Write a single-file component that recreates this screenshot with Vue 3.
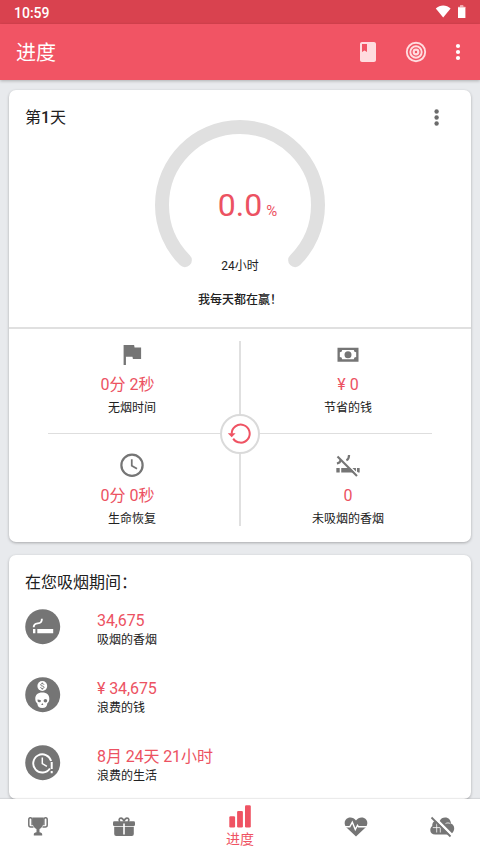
<script setup>
const stats = [
  { icon: 'flag', value: '0分 2秒', label: '无烟时间', area: 'a', trail: true },
  { icon: 'cash', value: '¥ 0', label: '节省的钱', area: 'b' },
  { icon: 'clock', value: '0分 0秒', label: '生命恢复', area: 'c', trail: true },
  { icon: 'nosmoke', value: '0', label: '未吸烟的香烟', area: 'd' },
]
const losses = [
  { icon: 'cigarette', value: '34,675', label: '吸烟的香烟' },
  { icon: 'skull', value: '¥ 34,675', label: '浪费的钱' },
  { icon: 'time', value: '8月 24天 21小时', label: '浪费的生活' },
]
</script>

<template>
  <div class="screen">
    <div class="status">
      <span>10:59</span>
      <svg class="status-icons" width="32" height="16" viewBox="0 0 32 16">
        <path d="M8.200 13.500.8 4.400C5 .5 11.400.5 15.600 4.400z" fill="#fff" />
        <path d="M25.200 1.500h3v1.500h2.200v11H23V3h2.200z" fill="#fff" />
        <path d="M25.200 1.200h3v1.500h2.200v.9H23v-.9h2.200z" fill="#f3a9b0" />
      </svg>
    </div>
    <header class="bar">
      <h1>进度</h1>
      <svg class="book" width="24" height="24" viewBox="0 0 24 24">
        <path fill-rule="evenodd" d="M18 2H6C4.900 2 4 2.900 4 4v16c0 1.100.9 2 2 2h12c1.100 0 2-.9 2-2V4c0-1.100-.9-2-2-2zM6 4h5v8l-2.500-1.500L6 12z" />
      </svg>
      <svg class="target" width="24" height="24" viewBox="0 0 24 24">
        <circle cx="12" cy="12" r="9.200" /><circle cx="12" cy="12" r="5.700" /><circle cx="12" cy="12" r="2.300" />
      </svg>
      <svg class="dots light" width="24" height="24" viewBox="0 0 24 24">
        <circle cx="12" cy="6" r="2.100" /><circle cx="12" cy="12" r="2.100" /><circle cx="12" cy="18" r="2.100" />
      </svg>
    </header>

    <main>
      <section class="card progress">
        <div class="top">
          <div class="head">
            <h2 class="day">第<b>1</b>天</h2>
            <svg class="dots" width="24" height="24" viewBox="0 0 24 24">
              <circle cx="11.600" cy="6.500" r="2.200" /><circle cx="11.600" cy="12.500" r="2.200" /><circle cx="11.600" cy="18.500" r="2.200" />
            </svg>
          </div>
          <div class="gauge">
            <svg width="172" height="172" viewBox="0 0 172 172">
              <path d="M30.850 141.150A78 78 0 1 1 141.150 141.150" fill="none" stroke="#e0e0e0" stroke-width="14" stroke-linecap="round" />
            </svg>
            <div class="reading"><span class="num">0.0</span><span class="pct">%</span></div>
            <div class="period">24小时</div>
          </div>
          <p class="motto">我每天都在赢！</p>
        </div>

        <div class="stats">
          <div v-for="s in stats" :key="s.area" class="stat" :class="['area-' + s.area, { trail: s.trail }]">
            <svg width="28" height="28" viewBox="0 0 24 24">
              <path v-if="s.icon === 'flag'" d="M14.400 6 14 4H5v17h2v-7h5.600l.4 2h7V6z" transform="translate(-.2 -.5)" />
              <path v-else-if="s.icon === 'cash'" d="M3 6h18v12H3zM12 9a3 3 0 1 1 0 6 3 3 0 0 1 0-6M7 8a2 2 0 0 1-2 2v4a2 2 0 0 1 2 2h10a2 2 0 0 1 2-2v-4a2 2 0 0 1-2-2z" fill-rule="evenodd" transform="translate(0 -.3)" />
              <g v-else-if="s.icon === 'clock'" fill="none" stroke="#757575">
                <circle cx="12" cy="12.200" r="9.100" stroke-width="1.900" />
                <path d="M11.800 7v5.600l4.500 2.700" stroke-width="1.500" />
              </g>
              <g v-else>
                <path d="M2 14.500h2.900v4H2zM6.200 14.500h7.500l4 4H6.200zM15.800 14.500h3v3zM19.700 14.500H22v4h-1.300l-1-1z" />
                <path d="M2.500 10.700c2-.4 3-1.500 3.300-3" fill="none" stroke="#757575" stroke-width="1.900" />
                <path d="M10.600 7.900c1.600-.6 2.300-1.900 2.300-4.500" fill="none" stroke="#757575" stroke-width="1.900" />
                <path d="M3 4.800 19.700 21.500" fill="none" stroke="#757575" stroke-width="1.800" />
              </g>
            </svg>
            <div class="value">{{ s.value }}</div>
            <div class="label">{{ s.label }}</div>
          </div>
          <i class="vline"></i>
          <i class="hline"></i>
          <button class="reset" aria-label="reset">
            <svg width="26" height="26" viewBox="0 0 26 26">
              <path d="M4.700 12.700A9 9 0 1 1 6.200 17.600" fill="none" stroke="#ef5363" stroke-width="2" />
              <path d="M.8 12.300h7.800l-3.900 4z" fill="#ef5363" />
            </svg>
          </button>
        </div>
      </section>

      <section class="card losses">
        <h2>在您吸烟期间：</h2>
        <div v-for="l in losses" :key="l.icon" class="loss">
          <svg width="36" height="36" viewBox="0 0 36 36">
            <circle cx="17.700" cy="17.700" r="17.500" fill="#757575" />
            <g v-if="l.icon === 'cigarette'" fill="#fff">
              <path d="M8 20h2.400v4.200H8zM12.300 20h15.900v4.200H12.300z" />
              <path d="M8.700 18.300c0-3 1.600-3.700 4-3.900 2.600-.2 4.200-.8 4.200-4.600" fill="none" stroke="#fff" stroke-width="1.900" />
            </g>
            <g v-else-if="l.icon === 'skull'">
              <circle cx="17.300" cy="9" r="4.900" fill="#fff" />
              <path d="M19 7.700c-.3-.8-.9-1.100-1.700-1.100-2.200 0-2.200 2.200 0 2.400 2.300.2 2.200 2.500 0 2.500-.9 0-1.500-.4-1.800-1.200M17.300 5.600v1.200M17.300 11.300v1.300" fill="none" stroke="#757575" stroke-width="1" />
              <path d="M17.300 15.500c4.600 0 7.300 2.700 7 6.800-.1 1.700-.5 2.500-1.200 3.200-.6.600-.9 1-1 2.100-.2 1.900-1.500 3.500-4.800 3.500s-4.600-1.600-4.800-3.500c-.1-1.100-.4-1.500-1-2.100-.7-.7-1.100-1.500-1.200-3.200-.3-4.100 2.400-6.800 7-6.800z" fill="#fff" />
              <path d="M12.600 22.500c1.200 0 2.300.3 3.500 1-.2 1.400-1 1.900-2 1.800-1.300-.1-1.700-1.200-1.500-2.800z" fill="#757575" />
              <circle cx="20.400" cy="23.700" r="1.800" fill="#757575" />
              <path d="m17.300 26.100 1.100 1.800h-2.200z" fill="#757575" />
            </g>
            <g v-else fill="none" stroke="#fff">
              <path d="M24.900 23.500A9.100 9.100 0 1 1 26.100 16" stroke-width="1.900" />
              <path d="M17.300 12.500v6.100l4.600 2.700" stroke-width="1.500" />
              <path d="M26.700 16.900v7.200M26.700 26v2.200" stroke-width="2" />
            </g>
          </svg>
          <div>
            <div class="value">{{ l.value }}</div>
            <div class="label">{{ l.label }}</div>
          </div>
        </div>
      </section>
    </main>

    <nav>
      <a>
        <svg width="24" height="24" viewBox="0 0 24 24">
          <path d="M6.300 2.500h11.400c.2 5.500-.4 9.900-4.200 11.400v3.300c1.700.3 2.700.9 2.700 2.100v1.300H7.800v-1.300c0-1.200 1-1.800 2.700-2.100v-3.300c-3.800-1.500-4.400-5.900-4.200-11.400z" />
          <path d="M7.500 12H4.800c-1.500 0-2-.5-2-2V4.600c0-1.400.4-1.900 1.500-1.900s1.800.6 1.800 1.900v5.700M16.500 12h2.700c1.500 0 2-.5 2-2V4.600c0-1.400-.4-1.900-1.500-1.900s-1.800.6-1.800 1.900v5.700" fill="none" stroke="#757575" stroke-width="1.500" />
        </svg>
      </a>
      <a>
        <svg width="24" height="24" viewBox="0 0 24 24">
          <rect x="1" y="6.200" width="22" height="4.900" rx="1.300" />
          <path d="M2.200 11.700h19.600v7.400a2 2 0 0 1-2 2H4.200a2 2 0 0 1-2-2z" />
          <path d="M12 6.300C11.300 4 10.300 3.100 9 3.100 6.800 3.100 6.600 5.300 8 6.800M12 6.300c.7-2.300 1.700-3.200 3-3.200 2.200 0 2.400 2.200 1 3.700" fill="none" stroke="#757575" stroke-width="1.600" />
          <path d="M11.200 8.500h1.600v11h-1.600z" fill="#fff" />
        </svg>
      </a>
      <a class="active">
        <svg width="24" height="24" viewBox="0 0 24 24">
          <rect x="1.300" y="12.200" width="5.800" height="11.300" rx="1.200" /><rect x="9.100" y="6.900" width="5.800" height="16.600" rx="1.200" /><rect x="17" y="1.200" width="5.800" height="22.300" rx="1.200" />
        </svg>
        <span>进度</span>
      </a>
      <a>
        <svg width="24" height="24" viewBox="0 0 24 24">
          <path d="M12 21.500 2.200 12.200C-.6 8.500.7 4.300 4 3c3-1.200 6-.1 8 2.500 2-2.600 5-3.700 8-2.500 3.300 1.300 4.600 5.500 1.800 9.200z" />
          <path d="M0 11.800h5.800l2.500-4.600 3 7.400 2.200-4.300 1 1.500H24" fill="none" stroke="#fff" stroke-width="1.400" />
        </svg>
      </a>
      <a>
        <svg width="26" height="24" viewBox="0 0 26 24">
          <path d="M6.300 19.500c-3.300 0-5-1.800-5-4.600 0-1.800.8-3.200 2-4-.2-3.300 1.800-5.300 4.400-5.500L21 19.500z" />
          <path d="M10.700 6c1-2.400 3-3.500 5.400-3.500 3.600 0 5.800 2.600 5.800 6.100 2.200.9 3.300 2.600 3.300 5 0 1.900-.8 3.500-2.200 4.600z" />
          <path d="M7.700 8v9.500M3.800 12.600h9.500M11.300 12v5.500M16.500 8.600c1.500-1 3.500-.8 4.800 0" fill="none" stroke="#fff" stroke-width=".8" />
          <path d="M4.300 2.300 23.300 21.300" stroke="#fff" stroke-width="1.500" />
          <path d="m2.500 2.500 19 19" stroke="#757575" stroke-width="1.800" />
        </svg>
      </a>
    </nav>
  </div>
</template>

<style>
body { margin: 0; background: #e8eaed; }
</style>

<style scoped>
.screen {
  width: 480px; height: 855px; overflow: hidden; display: flex; flex-direction: column;
  background: #e8eaed; color: #212121; font-family: Roboto, "Noto Sans CJK SC", sans-serif;
}
svg { display: block; flex: none; }
h1, h2, p { margin: 0; font-weight: 400; }
.status {
  height: 24px; flex: none; background: #d9424f; color: #fff; display: flex; justify-content: space-between;
  padding: 0 13px 0 14px; font-size: 14px; font-weight: 500; line-height: 26px;
}
.status-icons { margin-top: 4px; }
.bar {
  height: 56px; flex: none; display: flex; align-items: center; background: #f15464; color: #fff;
  padding: 0 10px 0 16px; box-shadow: 0 1px 3px rgba(0, 0, 0, .25); z-index: 1;
}
h1 { flex: 1; font-size: 20px; line-height: 28px; padding-top: 2px; }
.book { fill: #ffdcdf; margin-right: 24px; }
.target { fill: none; stroke: #ffdcdf; stroke-width: 1.9; margin-right: 18px; }
.target circle:last-child { stroke-width: 2.2; }
.dots { fill: #6b6b6b; }
.dots.light { fill: #fff; }
main { flex: 1; min-height: 0; padding: 10px 9px 0; display: flex; flex-direction: column; gap: 13px; }
.card { flex: none; background: #fff; border-radius: 7px; box-shadow: 0 1px 3px rgba(0, 0, 0, .28); }
.progress { height: 452px; }
.top { height: 239px; border-bottom: 2px solid #e0e0e0; box-sizing: border-box; }
.head { height: 29px; padding: 15px 22px 0 16px; display: flex; justify-content: space-between; }
.day { font-size: 16px; line-height: 24px; padding-top: 1px; }
.day b { font-weight: 500; }
.gauge { display: grid; justify-content: center; justify-items: center; grid-template: 172px / 172px; margin-top: -15px; }
.gauge > * { grid-area: 1 / 1; }
.reading { align-self: start; margin: 66px 0 0 15px; color: #ec5262; line-height: 40px; white-space: nowrap; }
.num { font-size: 32px; }
.pct { font-size: 15px; margin-left: 4px; }
.period { align-self: start; margin-top: 138px; font-size: 12px; line-height: 18px; }
.motto { text-align: center; font-size: 12px; font-weight: 500; line-height: 18px; }
.stats { display: grid; grid-template: 104px 1px 110px / 168px 48px 168px; justify-content: center; }
.stat { display: flex; flex-direction: column; align-items: center; fill: #757575; padding-top: 12px; }
.area-a { grid-area: 1 / 1; }
.area-b { grid-area: 1 / 3; }
.area-c { grid-area: 3 / 1; padding-top: 17px; }
.area-d { grid-area: 3 / 3; padding-top: 17px; }
.value { color: #ec5262; font-size: 16px; line-height: 24px; }
.stat .value { margin-top: 4px; }
.area-c .value, .area-d .value { margin-top: 5px; }
.trail .value { padding-right: 9px; }
.label { font-size: 12px; line-height: 18px; }
.stat .label { margin-top: 2px; }
.vline { grid-area: 1 / 2 / 4 / 3; justify-self: center; width: 2px; margin: 12px 0 18px; background: #e0e0e0; }
.hline { grid-area: 2 / 1 / 3 / 4; background: #dedede; }
.reset {
  grid-area: 2 / 2; place-self: center; box-sizing: border-box; width: 40px; height: 40px; margin: -20px 0;
  padding: 0; border: 2px solid #dadada; border-radius: 50%; background: #fff; display: flex; align-items: center; justify-content: center;
}
.losses { height: 244px; padding: 16px 16px 0; box-sizing: border-box; }
.losses h2 { font-size: 16px; line-height: 24px; }
.loss { display: flex; gap: 36px; height: 68px; padding-top: 14px; box-sizing: border-box; }
.loss .label { margin-top: -2px; }
.loss .value { letter-spacing: -.1px; }
nav {
  height: 56px; flex: none; display: flex; justify-content: center; background: #fff; z-index: 1;
  box-shadow: 0 -1px 1px rgba(0, 0, 0, .08);
}
nav a { width: 86px; flex: none; display: flex; flex-direction: column; align-items: center; padding-top: 16px; box-sizing: border-box; fill: #757575; }
nav .active { width: 146px; padding-top: 5px; fill: #ef5363; color: #ef5363; font-size: 14px; line-height: 20px; }
nav .active span { padding-top: 1px; }
</style>
